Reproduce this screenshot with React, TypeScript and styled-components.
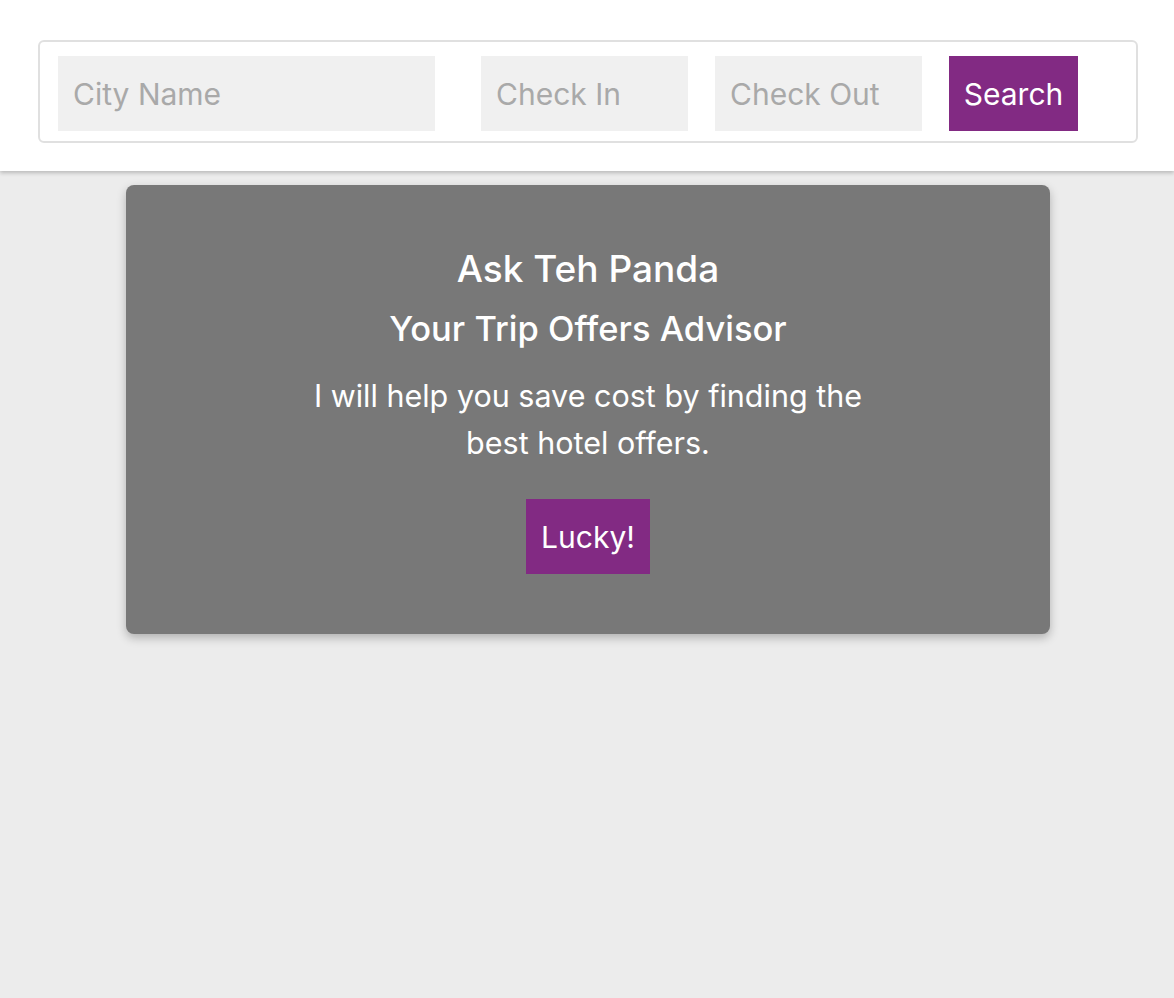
import React from "react";
import styled, { createGlobalStyle } from "styled-components";

const Global = createGlobalStyle`
  html, body { margin: 0; padding: 0; }
  body {
    background: #ececec;
    font-family: Inter, "Open Sans", "Liberation Sans", sans-serif;
    min-height: 998px;
  }
`;

const Header = styled.header`
  background: #fff;
  padding: 40px 36px 28px 38px;
  box-shadow: 0 2px 4px rgba(0, 0, 0, 0.22);
  position: relative;
  z-index: 1;
`;

const Form = styled.form`
  display: flex;
  align-items: flex-start;
  border: 2px solid #e0e0e0;
  border-radius: 6px;
  padding: 14px 18px 10px;
  height: 75px;
`;

const Field = styled.input<{ $w: number; $ml: number }>`
  width: ${(p) => p.$w}px;
  height: 75px;
  box-sizing: border-box;
  margin-left: ${(p) => p.$ml}px;
  border: none;
  outline: none;
  background: #f0f0f0;
  padding: 0 15px;
  font-family: inherit;
  font-size: 30px;
  color: #555;
  &::placeholder { color: #a9a9a9; }
`;

const PurpleButton = styled.button<{ $w: number; $ml?: number }>`
  width: ${(p) => p.$w}px;
  height: 75px;
  margin-left: ${(p) => p.$ml ?? 0}px;
  border: none;
  background: #822a83;
  color: #fff;
  font-family: inherit;
  font-size: 30px;
  padding: 0;
  cursor: pointer;
`;

const Main = styled.main`
  display: flex;
  justify-content: center;
  padding-top: 14px;
  padding-left: 2px;
`;

const Card = styled.section`
  width: 924px;
  height: 449px;
  box-sizing: border-box;
  background: #787878;
  border-radius: 8px;
  box-shadow: 0 4px 10px rgba(0, 0, 0, 0.25);
  color: #fff;
  display: flex;
  flex-direction: column;
  align-items: center;
  text-align: center;
  padding-top: 62px;
`;

const Title = styled.h1`
  margin: 0;
  font-size: 37px;
  font-weight: 500;
  line-height: 44px;
`;

const Subtitle = styled.h2`
  margin: 16px 0 0;
  font-size: 34.5px;
  font-weight: 500;
  line-height: 44px;
`;

const Text = styled.p`
  margin: 21px 0 0;
  width: 580px;
  font-size: 30.5px;
  font-weight: 400;
  line-height: 47px;
`;

const ButtonRow = styled.div`
  margin-top: 33px;
`;

export default function App() {
  return (
    <>
      <Global />
      <Header>
        <Form onSubmit={(e) => e.preventDefault()}>
          <Field $w={377} $ml={0} placeholder="City Name" />
          <Field $w={207} $ml={46} placeholder="Check In" />
          <Field $w={207} $ml={27} placeholder="Check Out" />
          <PurpleButton $w={129} $ml={27}>Search</PurpleButton>
        </Form>
      </Header>
      <Main>
        <Card>
          <Title>Ask Teh Panda</Title>
          <Subtitle>Your Trip Offers Advisor</Subtitle>
          <Text>I will help you save cost by finding the best hotel offers.</Text>
          <ButtonRow>
            <PurpleButton $w={124}>Lucky!</PurpleButton>
          </ButtonRow>
        </Card>
      </Main>
    </>
  );
}
